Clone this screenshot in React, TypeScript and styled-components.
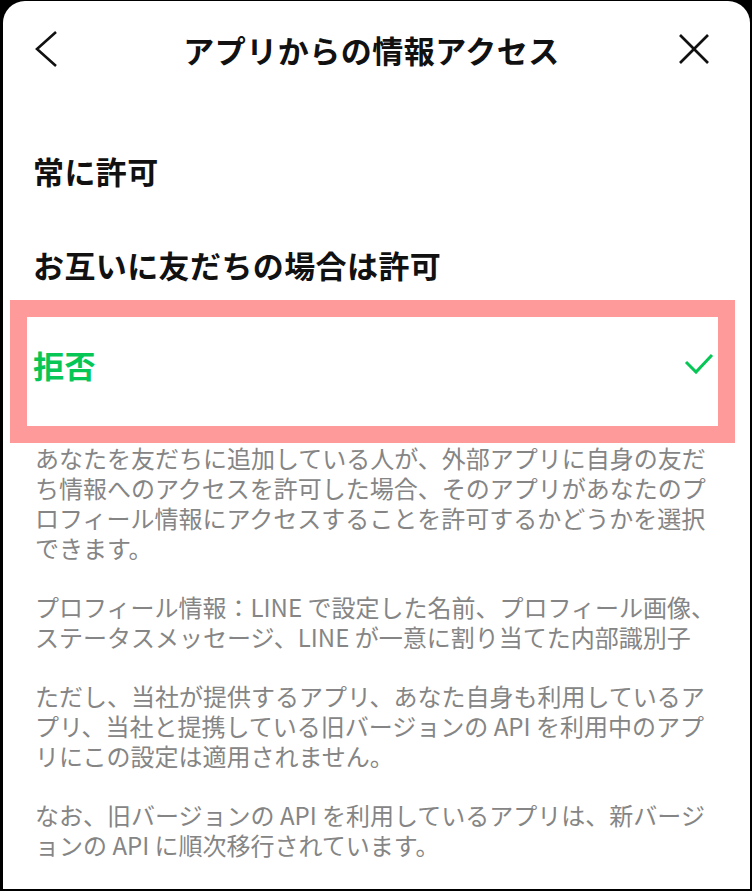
import React from "react";
import styled, { createGlobalStyle } from "styled-components";

const GlobalStyle = createGlobalStyle`
	html, body {
		margin: 0;
		padding: 0;
		background: #000;
	}
	body {
		font-family: "Noto Sans CJK JP", "Noto Sans", sans-serif;
	}
`;

const Screen = styled.div`
	margin: 1px 2px 2px 3px;
	height: 888px;
	background: #fff;
	border-radius: 22px 22px 0 0;
	overflow: hidden;
	display: flex;
	flex-direction: column;
`;

const Header = styled.header`
	display: grid;
	grid-template-columns: 1fr auto 1fr;
	align-items: center;
	height: 102px;
	padding: 0 41px 0 31px;
`;

const Title = styled.h1`
	margin: 0;
	font-size: 31px;
	font-weight: 700;
	color: #111;
	letter-spacing: 0.5px;
`;

const IconButton = styled.button<{ $align: "start" | "end" }>`
	justify-self: ${(p) => p.$align};
	display: flex;
	padding: 0;
	border: none;
	background: none;
`;

const OptionList = styled.div`
	padding-top: 26px;
	display: flex;
	flex-direction: column;
`;

const Option = styled.div<{ $selected?: boolean }>`
	display: flex;
	align-items: center;
	justify-content: space-between;
	height: 94px;
	padding: 0 30px;
	font-size: 31px;
	font-weight: 700;
	letter-spacing: 0.4px;
	color: ${(p) => (p.$selected ? "#06c755" : "#111")};
`;

// annotation frame drawn round the chosen row
const Highlight = styled.div`
	margin: -11px 15px 0 7px;
	border: 17px solid #ff9a9a;

	${Option} {
		height: 109px;
		box-sizing: border-box;
		padding: 0 4px 14px 6px;
	}
`;

const Description = styled.div`
	padding: 0 15px 0 32px;
	color: #858585;
	font-size: 24px;
	line-height: 30px;

	p {
		margin: 0 0 29px;
	}
`;

const BackIcon = () => (
	<svg width="24" height="40" viewBox="0 0 24 40" fill="none">
		<polyline points="22,3 3,20 22,37" stroke="#111" strokeWidth="2.6" />
	</svg>
);

const CloseIcon = () => (
	<svg width="30" height="30" viewBox="0 0 30 30" fill="none">
		<line x1="1" y1="1" x2="29" y2="29" stroke="#111" strokeWidth="2.6" />
		<line x1="29" y1="1" x2="1" y2="29" stroke="#111" strokeWidth="2.6" />
	</svg>
);

const CheckIcon = () => (
	<svg width="30" height="24" viewBox="0 0 30 24" fill="none">
		<polyline points="2,9 12,19 28,2" stroke="#06c755" strokeWidth="3" />
	</svg>
);

export default function App() {
	return (
		<>
			<GlobalStyle />
			<Screen>
				<Header>
					<IconButton $align="start">
						<BackIcon />
					</IconButton>
					<Title>アプリからの情報アクセス</Title>
					<IconButton $align="end">
						<CloseIcon />
					</IconButton>
				</Header>
				<OptionList>
					<Option>常に許可</Option>
					<Option>お互いに友だちの場合は許可</Option>
					<Highlight>
						<Option $selected>
							拒否
							<CheckIcon />
						</Option>
					</Highlight>
				</OptionList>
				<Description>
					<p>
						あなたを友だちに追加している人が、外部アプリに自身の友だ<br />
						ち情報へのアクセスを許可した場合、そのアプリがあなたのプ<br />
						ロフィール情報にアクセスすることを許可するかどうかを選択<br />
						できます。
					</p>
					<p>
						プロフィール情報：LINE で設定した名前、プロフィール画像、<br />
						ステータスメッセージ、LINE が一意に割り当てた内部識別子
					</p>
					<p>
						ただし、当社が提供するアプリ、あなた自身も利用しているア<br />
						プリ、当社と提携している旧バージョンの API を利用中のアプ<br />
						リにこの設定は適用されません。
					</p>
					<p>
						なお、旧バージョンの API を利用しているアプリは、新バージ<br />
						ョンの API に順次移行されています。
					</p>
				</Description>
			</Screen>
		</>
	);
}
